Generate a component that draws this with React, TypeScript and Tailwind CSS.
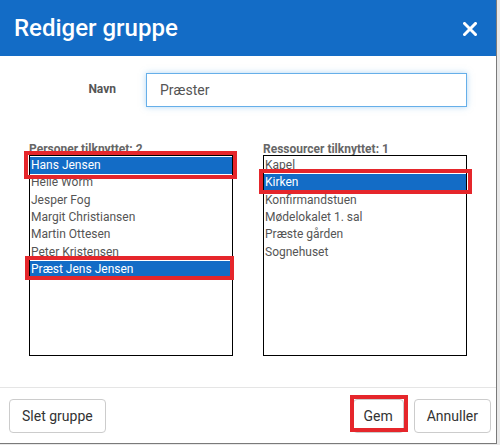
const persons = [
  { name: "Hans Jensen", selected: true },
  { name: "Helle Worm" },
  { name: "Jesper Fog" },
  { name: "Margit Christiansen" },
  { name: "Martin Ottesen" },
  { name: "Peter Kristensen" },
  { name: "Præst Jens Jensen", selected: true },
];

const resources = [
  { name: "Kapel" },
  { name: "Kirken", selected: true },
  { name: "Konfirmandstuen" },
  { name: "Mødelokalet 1. sal" },
  { name: "Præste gården" },
  { name: "Sognehuset" },
];

type Item = { name: string; selected?: boolean };

const ListBox = ({ label, items }: { label: string; items: Item[] }) => {
  return (
    <div className="w-[204px]">
      <div className="h-[14px] text-[12px] font-bold leading-[14px] text-[#666] whitespace-nowrap">
        {label}
      </div>
      <div className="relative -mt-px h-[201px] border border-black bg-white pt-px">
        {items.map((item) => (
          <div
            key={item.name}
            className={
              item.selected
                ? "h-[17.34px] bg-[#136cc6] pl-px text-[12px] leading-[17px] text-white"
                : "h-[17.34px] pl-px text-[12px] leading-[17px] text-[#555]"
            }
          >
            {item.name}
          </div>
        ))}
      </div>
    </div>
  );
};

export default function App() {
  return (
    <div
      className="relative h-[445px] w-[500px] bg-[#e9e9e9]"
      style={{ fontFamily: "Roboto, 'Liberation Sans', sans-serif" }}
    >
      {/* Dialog */}
      <div className="h-[444px] w-[497px] border-r border-b border-[#7a7a7a] bg-white">
        {/* Header */}
        <div className="flex h-[56px] items-center justify-between bg-[#136cc6] pl-[14px] pr-[19px]">
          <h1 className="text-[24px] font-medium leading-none text-white">
            Rediger gruppe
          </h1>
          <svg width="14" height="14" viewBox="0 0 14 14" className="mt-px">
            <path
              d="M1.5 1.5 L12.5 12.5 M12.5 1.5 L1.5 12.5"
              stroke="white"
              strokeWidth="3"
              strokeLinecap="square"
            />
          </svg>
        </div>

        {/* Body */}
        <div className="h-[331px] pt-[17px]">
          <div className="flex items-center">
            <label className="-mt-[2px] w-[116px] text-right text-[12px] font-bold text-[#555]">
              Navn
            </label>
            <div className="ml-[30px] flex h-[34px] w-[321px] items-center border border-[#66afe9] px-[13px] text-[14px] text-[#555] shadow-[0_0_6px_rgba(102,175,233,0.5)]">
              Præster
            </div>
          </div>

          <div className="mt-[35px] flex gap-[30px] pl-[29px]">
            <ListBox label="Personer tilknyttet: 2" items={persons} />
            <ListBox label="Ressourcer tilknyttet: 1" items={resources} />
          </div>
        </div>

        {/* Footer */}
        <div className="flex items-start justify-between border-t border-[#e5e5e5] pl-[9px] pr-[5px] pt-[11px]">
          <button className="h-[34px] rounded-[4px] border border-[#ccc] bg-white px-[12px] text-[14px] text-[#333]">
            Slet gruppe
          </button>
          <div className="flex gap-[10px]">
            <button className="h-[34px] w-[51px] rounded-[4px] border border-[#ccc] bg-white text-[14px] text-[#333]">
              Gem
            </button>
            <button className="h-[34px] rounded-[4px] border border-[#ccc] bg-white px-[12px] text-[14px] text-[#333]">
              Annuller
            </button>
          </div>
        </div>
      </div>

      {/* Red highlight annotations */}
      <div className="absolute left-[24px] top-[151px] h-[28px] w-[213px] border-4 border-[#e5262b]" />
      <div className="absolute left-[25px] top-[256px] h-[24px] w-[209px] border-4 border-[#e5262b]" />
      <div className="absolute left-[259px] top-[169px] h-[25px] w-[213px] border-4 border-[#e5262b]" />
      <div className="absolute left-[350px] top-[395px] h-[37px] w-[58px] border-4 border-[#e5262b]" />
    </div>
  );
}
